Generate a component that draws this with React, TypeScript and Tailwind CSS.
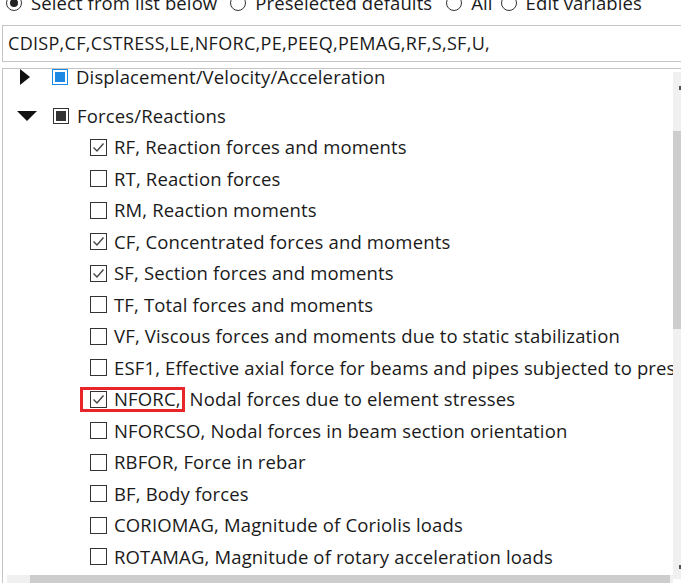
import React from "react";

type Item = { label: string; checked?: boolean; mark?: boolean };

const items: Item[] = [
  { label: "RF, Reaction forces and moments", checked: true },
  { label: "RT, Reaction forces" },
  { label: "RM, Reaction moments" },
  { label: "CF, Concentrated forces and moments", checked: true },
  { label: "SF, Section forces and moments", checked: true },
  { label: "TF, Total forces and moments" },
  { label: "VF, Viscous forces and moments due to static stabilization" },
  { label: "ESF1, Effective axial force for beams and pipes subjected to pressure loads" },
  { label: "NFORC, Nodal forces due to element stresses", checked: true, mark: true },
  { label: "NFORCSO, Nodal forces in beam section orientation" },
  { label: "RBFOR, Force in rebar" },
  { label: "BF, Body forces" },
  { label: "CORIOMAG, Magnitude of Coriolis loads" },
  { label: "ROTAMAG, Magnitude of rotary acceleration loads" },
];

const font = { fontFamily: '"Open Sans", "Noto Sans", sans-serif' };

function Radio({ on, label }: { on?: boolean; label: string }) {
  return (
    <div className="flex items-center gap-[9px]">
      <span className="flex h-[16px] w-[16px] items-center justify-center rounded-full border border-[#333] bg-white">
        {on && <span className="h-[8px] w-[8px] rounded-full bg-[#222]" />}
      </span>
      <span>{label}</span>
    </div>
  );
}

function Check({ on }: { on?: boolean }) {
  return (
    <span className="flex h-[17px] w-[17px] shrink-0 items-center justify-center border border-[#333] bg-white">
      {on && (
        <svg width="13" height="13" viewBox="0 0 13 13">
          <path d="M1.5 6.5 L5 10 L11.5 2.5" fill="none" stroke="#444" strokeWidth="1.4" />
        </svg>
      )}
    </span>
  );
}

function Row({ item }: { item: Item }) {
  const i = item.label.indexOf(",");
  const code = item.label.slice(0, i + 1);
  const rest = item.label.slice(i + 1);
  return (
    <div className="flex h-[31.5px] items-center whitespace-nowrap pl-[87px]">
      {item.mark ? (
        <span className="-ml-[10px] flex h-[25px] items-center border-[3px] border-[#e8252a] pl-[7px] pr-[1px]">
          <Check on={item.checked} />
          <span className="ml-[7px]">{code}</span>
        </span>
      ) : (
        <>
          <Check on={item.checked} />
          <span className="ml-[7px]">{code}</span>
        </>
      )}
      <span className="whitespace-pre">{rest}</span>
    </div>
  );
}

export default function App() {
  return (
    <div className="relative h-[583px] w-[681px] overflow-hidden bg-white text-[#1a1a1a]" style={font}>
      <div className="-mt-[9px] flex h-[24px] items-center pl-[6px] text-[18.5px] tracking-[0.1px]">
        <Radio on label="Select from list below" />
        <span className="w-[13px]" />
        <Radio label="Preselected defaults" />
        <span className="w-[14px]" />
        <Radio label="All" />
        <span className="w-[8px]" />
        <Radio label="Edit variables" />
      </div>
      <div className="ml-[2px] mt-[10px] flex h-[37px] w-[700px] items-center border border-[#c4c4c4] pl-[5px] text-[18px] tracking-[0.3px]">
        CDISP,CF,CSTRESS,LE,NFORC,PE,PEEQ,PEMAG,RF,S,SF,U,
      </div>
      <div className="relative ml-[2px] mt-[6px] h-[520px] border-l border-t border-[#c4c4c4] text-[18.5px] tracking-[0.15px]">
        <div className="-mt-[15px]">
          <div className="flex h-[46px] items-center pl-[16px]">
            <svg width="12" height="16" viewBox="0 0 12 16">
              <path d="M1 0 L11 8 L1 16 Z" fill="#111" />
            </svg>
            <span className="ml-[21px] flex h-[16px] w-[16px] items-center justify-center border border-[#1e88e5] bg-white">
              <span className="h-[10px] w-[10px] bg-[#1e88e5]" />
            </span>
            <span className="ml-[8px]">Displacement/Velocity/Acceleration</span>
          </div>
          <div className="flex h-[31.5px] items-center pl-[14px]">
            <svg width="20" height="12" viewBox="0 0 20 12">
              <path d="M0 1 L20 1 L10 11 Z" fill="#111" />
            </svg>
            <span className="ml-[16px] flex h-[16px] w-[16px] items-center justify-center border border-[#333] bg-white">
              <span className="h-[10px] w-[10px] bg-[#333]" />
            </span>
            <span className="ml-[8px]">Forces/Reactions</span>
          </div>
          {items.map((it) => (
            <Row key={it.label} item={it} />
          ))}
        </div>
        <div className="absolute right-0 top-[3px] h-[507px] w-[8px] bg-[#f0f0f0]">
          <div className="absolute right-0 top-[14px] h-[4px] w-[2px] bg-[#555]" />
          <div className="absolute left-0 top-[59px] h-[198px] w-full bg-[#cdcdcd]" />
          <div className="absolute right-0 bottom-[10px] h-[4px] w-[2px] bg-[#555]" />
        </div>
      </div>
      <div className="absolute bottom-0 left-[7px] flex h-[8px] w-[666px] bg-[#f0f0f0]">
        <div className="ml-[23px] h-full w-[640px] bg-[#cdcdcd]" />
      </div>
    </div>
  );
}
